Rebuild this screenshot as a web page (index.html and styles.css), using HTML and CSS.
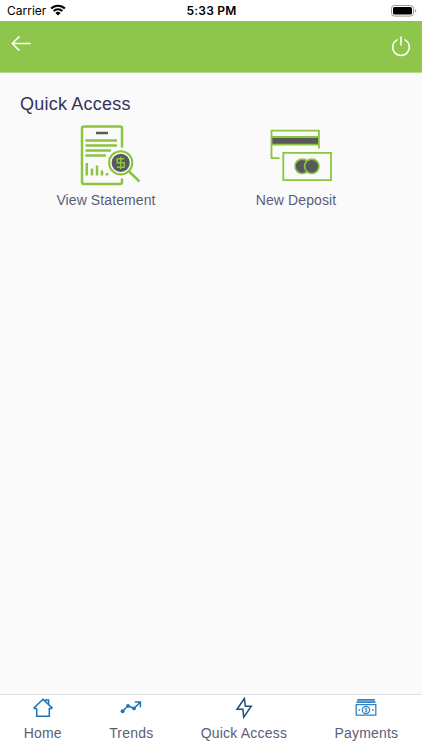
FILE: index.html
```html
<!DOCTYPE html>
<html lang="en">
<head>
    <meta charset="UTF-8">
    <meta name="viewport" content="width=device-width, initial-scale=1.0">
    <title>Quick Access</title>
    <link rel="stylesheet" href="styles.css">
</head>
<body>
    <div class="status-bar">
        <div class="carrier">
            <span>Carrier</span>
            <svg class="wifi" width="16" height="12" viewBox="0 0 16 12">
                <path d="M1.1 4.6a9.8 9.8 0 0 1 13.8 0M3.6 7.1a6.2 6.2 0 0 1 8.8 0" fill="none" stroke="#000" stroke-width="2.1"/>
                <path d="M5.4 9a3.7 3.7 0 0 1 5.2 0L8 11.6z"/>
            </svg>
        </div>
        <span class="time">5:33 PM</span>
        <svg class="battery" width="26" height="12" viewBox="0 0 26 12">
            <rect x="0.5" y="0.5" width="22" height="10.6" rx="3" fill="#fff" stroke="#999"/>
            <rect x="2" y="2" width="19" height="7.6" rx="1.6"/>
            <path d="M24 4v3.6q1.3-.6 1.3-1.8T24 4z" fill="#999"/>
        </svg>
    </div>

    <header class="top-bar">
        <svg class="back" width="20" height="16" viewBox="0 0 20 16">
            <path d="M19.2 7.5H1.2M8 0.9L1.2 7.5L8 14.1"/>
        </svg>
        <svg class="power" width="20" height="21" viewBox="0 0 20 21">
            <path d="M6 3.9a8.3 8.3 0 1 0 8 0M10 1v8"/>
        </svg>
    </header>

    <main>
        <h1>Quick Access</h1>
        <div class="tiles">
            <a class="tile">
                <!-- statement with magnifier -->
                <svg width="80" height="74" viewBox="-4 0 80 74">
                    <g fill="none" stroke="#8bc53f" stroke-width="2.5">
                        <path d="M52 32.5V13.5a2 2 0 0 0-2-2H14a2 2 0 0 0-2 2V67a2 2 0 0 0 2 2H50a2 2 0 0 0 2-2V63.5"/>
                        <path d="M15.5 25.5H47M15.5 30.5H47M15.5 35.5H41M15.5 40.5H36"/>
                        <path d="M16.8 48V60.5M22 53.5V60.5M27 50.5V60.5M32 55.5V60.5M37 58V60.5"/>
                        <path d="M58.5 56L69.5 66.5"/>
                    </g>
                    <path d="M26 18h12" stroke="#58595b" stroke-width="2.5"/>
                    <circle cx="50.7" cy="47.8" r="11.6" fill="#fafafa" stroke="#8bc53f" stroke-width="2.1"/>
                    <circle cx="50.7" cy="47.8" r="9.1" fill="#58595b"/>
                    <path d="M54.2 43.8H47.2V47.8H54.2V52.2H46.8M50.7 41.8V54.2" fill="none" stroke="#8bc53f" stroke-width="1.5"/>
                </svg>
                <span>View Statement</span>
            </a>
            <a class="tile">
                <!-- bank cards -->
                <svg width="80" height="74" viewBox="-4 0 80 74">
                    <path d="M12 22.4h46.5v7H12z" fill="#58595b"/>
                    <g fill="none" stroke="#8bc53f" stroke-width="1.8">
                        <path d="M58.9 33.5V15.6H11.5V43.2H19.5"/>
                        <path d="M11.5 22H59M11.5 29.6H59"/>
                        <path d="M23.3 37.8H71V65.2H23.3z"/>
                    </g>
                    <g fill="#58595b" stroke="#8bc53f" stroke-width="1.7">
                        <circle cx="42.2" cy="51.3" r="7.2"/>
                        <circle cx="51.8" cy="51.3" r="7.2"/>
                    </g>
                </svg>
                <span>New Deposit</span>
            </a>
        </div>
    </main>

    <nav class="tab-bar">
        <a class="tab">
            <svg width="22" height="22" viewBox="0 0 22 22">
                <path d="M4.7 11V19.2H17.3V11M1.5 11.6H4.5M17.5 11.6H20.5M1.5 11.4L11 2.3L20.5 11.4M13.7 4.7V2.9H16.6V7.5"/>
            </svg>
            <span>Home</span>
        </a>
        <a class="tab">
            <svg width="22" height="22" viewBox="0 0 22 22">
                <path d="M2.6 14.2L8 8.8L14 11.3L20.2 5.2M14.8 5H20.4V10.2"/>
                <g class="dots">
                    <circle cx="2.6" cy="14.3" r="2"/>
                    <circle cx="8" cy="8.9" r="1.9"/>
                    <circle cx="14" cy="11.4" r="1.9"/>
                </g>
            </svg>
            <span>Trends</span>
        </a>
        <a class="tab active">
            <svg width="22" height="22" viewBox="0 0 22 22">
                <path d="M11.4 1.5L4 12.3H9.9L10.7 20.2L18.2 9.3H12.3z"/>
            </svg>
            <span>Quick Access</span>
        </a>
        <a class="tab">
            <svg width="22" height="22" viewBox="0 0 22 22">
                <g class="notes">
                    <path d="M2.2 2.8H19.8M1.5 5.2H20.5" stroke-width="1.8"/>
                    <path d="M1.2 7.7H20.8V18.2H1.2z"/>
                    <circle cx="11" cy="12.9" r="3.6"/>
                    <path d="M12 11.4H10.3V12.8H11.8V14.5H10.1M11 10.6V15.4" stroke-width="0.7"/>
                    <path d="M3.5 12.9H5M17 12.9H18.5" stroke-width="1.5"/>
                </g>
            </svg>
            <span>Payments</span>
        </a>
    </nav>
</body>
</html>
```
FILE: styles.css
```css
* { box-sizing: border-box; }
body {
    margin: 0;
    height: 100vh;
    display: flex;
    flex-direction: column;
    overflow: hidden;
    font-family: "Liberation Sans", Arial, sans-serif;
    background: #fafafa;
    color: #5b5d78;
}
svg { display: block; }
.status-bar {
    display: grid;
    grid-template-columns: 1fr auto 1fr;
    align-items: center;
    height: 21px;
    padding: 0 6px 0 7px;
    background: #fff;
    color: #000;
    font-family: Inter, sans-serif;
    font-size: 12px;
}
.carrier {
    display: flex;
    align-items: center;
    gap: 4px;
}
.wifi { margin-bottom: 1px; }
.time {
    font-weight: 600;
    letter-spacing: 0.2px;
}
.battery {
    justify-self: end;
    margin-right: -1px;
}
.top-bar {
    display: flex;
    justify-content: space-between;
    height: 52px;
    padding: 15px 11px 0;
    background: #8dc64a;
    border-bottom: 1px solid #b5da8a;
}
.top-bar svg {
    fill: none;
    stroke: #fff;
    stroke-width: 1.5;
    stroke-linecap: round;
}
.back { stroke-linejoin: round; }
main {
    flex: 1;
    padding-top: 20px;
}
h1 {
    margin: 0 20px;
    font-size: 18px;
    font-weight: normal;
    line-height: 22px;
    letter-spacing: 0.22px;
    color: #35345a;
}
.tiles {
    display: grid;
    grid-template-columns: 1fr 1fr;
    padding: 0 31px 0 11px;
}
.tile {
    display: flex;
    flex-direction: column;
    align-items: center;
    font-size: 14px;
    line-height: 22px;
    letter-spacing: 0.1px;
}
.tab-bar {
    display: flex;
    justify-content: space-around;
    height: 56px;
    padding-top: 2px;
    background: #fff;
    border-top: 1px solid #dedfe1;
}
.tab {
    display: flex;
    flex-direction: column;
    align-items: center;
    gap: 5px;
    font-size: 14px;
    line-height: 18px;
    letter-spacing: 0.2px;
}
.tab svg {
    fill: none;
    stroke: #1b75bb;
    stroke-width: 1.5;
}
.tab.active svg { stroke: #1b5080; }
.tab .dots { fill: #1b75bb; stroke: none; }
.tab .notes { stroke: #3183c5; stroke-width: 1.3; }
```
